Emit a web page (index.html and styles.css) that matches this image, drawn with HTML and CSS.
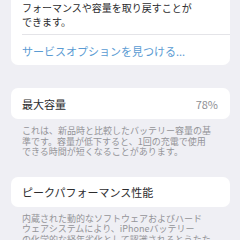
FILE: index.html
```html
<!DOCTYPE html>
<html lang="ja">

<head>
    <meta charset="UTF-8">
    <meta name="viewport" content="width=device-width, initial-scale=1.0">
    <title>バッテリーの状態</title>
    <link rel="stylesheet" href="styles.css">
</head>

<body>
    <div class="page">
        <!-- Service card (top cut off) -->
        <div class="card card-service">
            <p class="card-note">フォーマンスや容量を取り戻すことができます。</p>
            <div class="card-link">サービスオプションを見つける...</div>
        </div>

        <!-- Maximum capacity -->
        <div class="card">
            <div class="card-row">
                <span class="row-label">最大容量</span>
                <span class="row-value">78%</span>
            </div>
        </div>
        <p class="footer-note">これは、新品時と比較したバッテリー容量の基準です。容量が低下すると、1回の充電で使用できる時間が短くなることがあります。</p>

        <!-- Peak performance -->
        <div class="card card-peak">
            <div class="card-row">
                <span class="row-label">ピークパフォーマンス性能</span>
            </div>
        </div>
        <p class="footer-note">内蔵された動的なソフトウェアおよびハードウェアシステムにより、iPhoneバッテリー<br>の化学的な経年劣化として認識されるとうたた時に、パフォーマンスへの影響が軽減されます。</p>
    </div>
</body>

</html>
```

FILE: styles.css
```css
body {
    margin: 0;
    background-color: #efeff4;
    font-family: "Noto Sans CJK JP", "Noto Sans", sans-serif;
    color: #2c2c2e;
    overflow: hidden;
}

.page {
    padding: 0 10px 0 11px;
}

.card {
    background-color: #fff;
    border-radius: 7px;
    padding-left: 11px;
}

/* Service card */
.card-service {
    margin-top: -9px;
}

.card-note {
    margin: 0;
    padding: 10px 30px 5px 0;
    font-size: 10px;
    line-height: 14px;
    line-break: strict;
}

.card-link {
    border-top: 1px solid #e4e4e8;
    padding-top: 2px;
    height: 28px;
    line-height: 28px;
    font-size: 11px;
    color: #5a9bd3;
}

/* Rows */
.card-row {
    display: flex;
    justify-content: space-between;
    align-items: center;
    height: 31px;
    padding-right: 12px;
    font-size: 11px;
}

.card-service + .card {
    margin-top: 23px;
}

.row-value {
    color: #8e8e93;
}

.footer-note {
    margin: 0;
    padding: 7px 17px 0 11px;
    font-size: 9px;
    line-height: 10.5px;
    color: #949498;
    line-break: strict;
}

.card-peak {
    margin-top: 19px;
}

.card-peak .card-row {
    height: 30px;
}
```
